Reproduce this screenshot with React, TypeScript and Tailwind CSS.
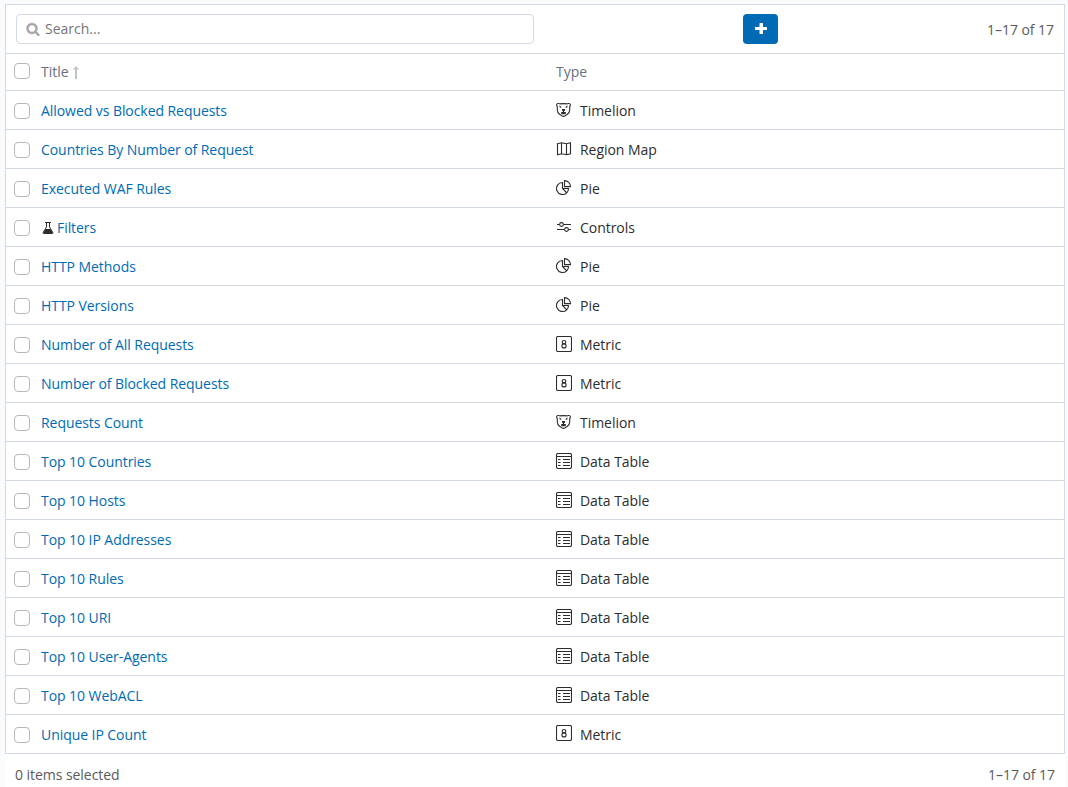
import { useState } from 'react';
import type { ReactNode } from 'react';

type VisType =
  | 'Timelion'
  | 'Region Map'
  | 'Pie'
  | 'Controls'
  | 'Metric'
  | 'Data Table';

type Item = {
  title: string;
  type: VisType;
  experimental?: boolean;
};

const items: Item[] = [
  { title: 'Allowed vs Blocked Requests', type: 'Timelion' },
  { title: 'Countries By Number of Request', type: 'Region Map' },
  { title: 'Executed WAF Rules', type: 'Pie' },
  { title: 'Filters', type: 'Controls', experimental: true },
  { title: 'HTTP Methods', type: 'Pie' },
  { title: 'HTTP Versions', type: 'Pie' },
  { title: 'Number of All Requests', type: 'Metric' },
  { title: 'Number of Blocked Requests', type: 'Metric' },
  { title: 'Requests Count', type: 'Timelion' },
  { title: 'Top 10 Countries', type: 'Data Table' },
  { title: 'Top 10 Hosts', type: 'Data Table' },
  { title: 'Top 10 IP Addresses', type: 'Data Table' },
  { title: 'Top 10 Rules', type: 'Data Table' },
  { title: 'Top 10 URI', type: 'Data Table' },
  { title: 'Top 10 User-Agents', type: 'Data Table' },
  { title: 'Top 10 WebACL', type: 'Data Table' },
  { title: 'Unique IP Count', type: 'Metric' },
];

const icons: Record<VisType, ReactNode> = {
  Timelion: (
    <>
      <path d="M4 1.900C2.800 1.100.6 1.500.6 3c0 .6.300 1.100.7 1.500v3.500c0 1.800.9 3.200 2.300 4.200 1.300 1 2.300 2.200 3.900 2.200s2.600-1.200 3.900-2.200c1.400-1 2.300-2.400 2.300-4.200V4.500c.4-.4.7-.9.7-1.500 0-1.500-2.200-1.900-3.400-1.100-2.200-.4-4.800-.4-7 0z" />
      <path
        d="M3 3.600l2.200.9v1.600L4 5.600zM12 3.600l-2.200.9v1.600l1.200-.5zM6 6.900h3v1.500l-.9.9v.7h1.700v2.300H5.200V10h1.700v-.7L6 8.400z"
        fill="currentColor"
        stroke="none"
      />
    </>
  ),
  'Region Map': (
    <path d="M1.500 2.800l4-1 5 1 4-1v11l-4 1-5-1-4 1zM5.500 1.800v11M10.500 2.800v11" />
  ),
  Pie: (
    <>
      <path d="M6.500 2.500a6 6 0 1 0 4.200 10.300L6.500 8.500z" />
      <path d="M8.500.6v6h6a6 6 0 0 0-6-6z" />
      <path d="M7 8.500h5.500a6 6 0 0 1-1.700 4.200" />
    </>
  ),
  Controls: (
    <>
      <path d="M1 5.500h2.500M7.500 5.500H15M1 10.500h7.500M12.500 10.500H15" />
      <circle cx="5.500" cy="5.500" r="1.900" />
      <circle cx="10.500" cy="10.500" r="1.900" />
    </>
  ),
  Metric: (
    <>
      <rect x=".5" y=".5" width="15" height="15" rx="1.500" />
      <ellipse cx="8" cy="6.200" rx="1.800" ry="1.700" />
      <ellipse cx="8" cy="9.900" rx="2.100" ry="2" />
    </>
  ),
  'Data Table': (
    <>
      <rect x=".5" y=".5" width="15" height="15" rx="1.500" />
      <path d="M.5 3.500h15M2 6.500h2.500M7 6.500h7M2 9.500h2.500M7 9.500h7M2 12.500h2.500M7 12.500h7" />
    </>
  ),
};

function TypeIcon({ type }: { type: VisType }) {
  return (
    <svg
      className="mb-[3px] size-4 shrink-0 text-[#2d2d2d]"
      viewBox="0 0 16 16"
      fill="none"
      stroke="currentColor"
      strokeWidth="1.1"
      aria-hidden
    >
      {icons[type]}
    </svg>
  );
}

function Checkbox({
  label,
  checked,
  onChange,
}: {
  label: string;
  checked: boolean;
  onChange: () => void;
}) {
  return (
    <input
      type="checkbox"
      aria-label={label}
      checked={checked}
      onChange={onChange}
      className="size-4 shrink-0 appearance-none rounded-[4px] border border-[#b8b8b8] bg-white checked:border-[#006bb4] checked:bg-[#006bb4]"
    />
  );
}

function FlaskIcon() {
  return (
    <svg className="mr-[3px] ml-px h-3 w-3" viewBox="0 0 12 12" fill="none">
      <path d="M3 .5h6M4.500 1v4L1.200 10.500q-.4 1 .6 1h8.400q1 0 .6-1L7.500 5V1" stroke="#2d2d2d" />
      <path d="M3.500 7h5l2.600 4.300H.9z" fill="#2d2d2d" />
    </svg>
  );
}

export default function App() {
  const [query, setQuery] = useState('');
  const [selected, setSelected] = useState<string[]>([]);

  const visible = items.filter((item) =>
    item.title.toLowerCase().includes(query.toLowerCase()),
  );
  const allSelected = selected.length === items.length;
  const range = `${visible.length ? 1 : 0}–${visible.length} of ${visible.length}`;

  const toggle = (title: string) => {
    setSelected((prev) =>
      prev.includes(title) ? prev.filter((t) => t !== title) : [...prev, title],
    );
  };

  return (
    <div className="h-[787px] overflow-hidden bg-[#fafbfd] pt-1 pr-[3px] pl-[5px] font-['Open_Sans',sans-serif] text-sm text-[#2d2d2d]">
      <div className="h-full bg-white">
        <div className="border border-[#d3dae6]">
          <div className="flex h-12 items-center pr-[10px] pl-[10px]">
            <label className="flex h-[30px] w-[518px] items-center rounded border border-[#d3dae6] pl-[8.5px]">
              <svg
                className="mb-px size-[14px] text-[#a6a6a6]"
                viewBox="0 0 1792 1792"
                fill="currentColor"
                stroke="currentColor"
                strokeWidth="50"
              >
                <path d="M1216 832q0-185-131.500-316.500t-316.500-131.500-316.500 131.500-131.500 316.500 131.500 316.500 316.500 131.500 316.500-131.500 131.500-316.500zm512 832q0 52-38 90t-90 38q-54 0-90-38l-343-342q-179 124-399 124-143 0-273.500-55.500t-225-150-150-225-55.500-273.500 55.500-273.500 150-225 225-150 273.500-55.500 273.500 55.500 225 150 150 225 55.500 273.500q0 220-124 399l343 343q37 37 37 90z" />
              </svg>
              <input
                className="ml-[5.5px] flex-1 bg-transparent outline-none placeholder:text-[#757575]"
                placeholder="Search..."
                aria-label="Search"
                value={query}
                onChange={(e) => setQuery(e.target.value)}
              />
            </label>
            <button
              className="ml-[209px] flex h-[30px] w-[35px] items-center justify-center rounded bg-[#006bb4] text-white"
              aria-label="Create new visualization"
            >
              <svg className="size-[14px]" viewBox="0 0 14 14" fill="currentColor">
                <path d="M6 1h2.500q.5 0 .5.500V5h3.500q.5 0 .5.500v2q0 .5-.5.500H9v3.500q0 .5-.5.500H6q-.5 0-.5-.5V8H1.500Q1 8 1 7.500v-2Q1 5 1.500 5h4V1.500Q5.500 1 6 1z" />
              </svg>
            </button>
            <span className="ml-auto pt-0.5 tracking-[-0.05px] text-[#5a5a5a]">{range}</span>
          </div>

          <table className="w-full table-fixed border-collapse">
            <thead>
              <tr className="h-[37px] border-t border-[#d3dae6] text-left text-[#69707d]">
                <th className="w-[35px] p-0 pl-2 font-normal">
                  <div className="flex pb-0.5">
                    <Checkbox
                      label="Select all"
                      checked={allSelected}
                      onChange={() =>
                        setSelected(allSelected ? [] : items.map((i) => i.title))
                      }
                    />
                  </div>
                </th>
                <th className="w-[515px] p-0 font-normal">
                  <span className="flex items-center">
                    Title
                    <svg className="ml-1 h-[13px] w-[6px] text-[#c2c3c6]" viewBox="0 0 6 13" fill="currentColor">
                      <path d="M3 0l3 3.500H4V13H2V3.500H0z" />
                    </svg>
                  </span>
                </th>
                <th className="p-0 font-normal">Type</th>
              </tr>
            </thead>
            <tbody>
              {visible.map(({ title, type, experimental }) => (
                <tr
                  key={title}
                  className="h-[39px] border-t border-[#d3dae6] last:h-[38px]"
                >
                  <td className="p-0 pt-0.5 pl-2">
                    <div className="flex">
                      <Checkbox
                        label={`Select ${title}`}
                        checked={selected.includes(title)}
                        onChange={() => toggle(title)}
                      />
                    </div>
                  </td>
                  <td className="p-0 pt-0.5">
                    <div className="flex items-center">
                      {experimental && <FlaskIcon />}
                      <a href="#" className="tracking-[-0.06px] text-[#006bb4]">
                        {title}
                      </a>
                    </div>
                  </td>
                  <td className="p-0 pt-0.5">
                    <div className="flex items-center gap-2 tracking-[-0.04px]">
                      <TypeIcon type={type} />
                      {type}
                    </div>
                  </td>
                </tr>
              ))}
            </tbody>
          </table>
        </div>

        <div className="flex h-[42px] items-center justify-between pr-[10px] pl-[10px] tracking-[-0.05px] text-[#5a5a5a]">
          <span>{selected.length} items selected</span>
          <span>{range}</span>
        </div>
      </div>
    </div>
  );
}
